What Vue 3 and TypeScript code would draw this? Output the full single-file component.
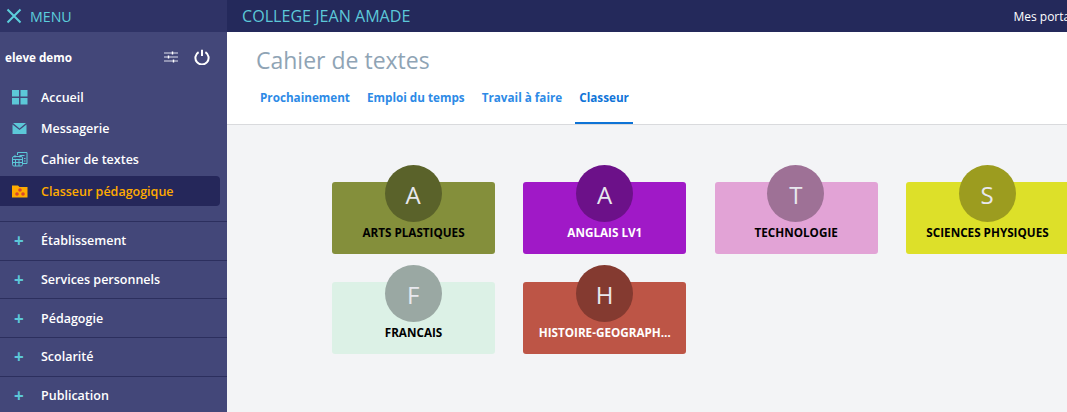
<script setup lang="ts">
interface Subject {
  letter: string
  label: string
  bg: string
  badge: string
  text: string
}

const subjects: Subject[] = [
  {letter: 'A', label: 'ARTS PLASTIQUES', bg: '#848f3b', badge: '#5a622a', text: '#000'},
  {letter: 'A', label: 'ANGLAIS LV1', bg: '#a019c7', badge: '#6c1189', text: '#fff'},
  {letter: 'T', label: 'TECHNOLOGIE', bg: '#e2a3d6', badge: '#9e7196', text: '#000'},
  {letter: 'S', label: 'SCIENCES PHYSIQUES', bg: '#dde029', badge: '#9c9c1f', text: '#000'},
  {letter: 'F', label: 'FRANCAIS', bg: '#dcf1e6', badge: '#9aa8a3', text: '#000'},
  {letter: 'H', label: 'HISTOIRE-GEOGRAPHIE', bg: '#bd5546', badge: '#843a30', text: '#fff'},
]

const sections = ['Établissement', 'Services personnels', 'Pédagogie', 'Scolarité', 'Publication']
const tabs = ['Prochainement', 'Emploi du temps', 'Travail à faire', 'Classeur']
</script>

<template>
  <div class="page">
    <aside class="sidebar">
      <div class="menu-head">
        <svg width="16" height="16" viewBox="0 0 16 16">
          <path d="M1.5 1.5L14.5 14.5M14.5 1.5L1.5 14.5" stroke="#5ccfdc" stroke-width="2" fill="none"/>
        </svg>
        <span>MENU</span>
      </div>
      <div class="user">
        <span class="user-name">eleve demo</span>
        <svg width="16" height="12" viewBox="0 0 16 12" class="user-settings">
          <path d="M1 2H15M1 6H15M1 10H15" stroke="#dfe1ee" stroke-width="1" fill="none"/>
          <path d="M9.5 .5V3.5M5.5 4.5V7.5M10.5 8.5V11.5" stroke="#fff" stroke-width="1.4" fill="none"/>
        </svg>
        <svg width="16" height="16" viewBox="0 0 16 16" class="user-power">
          <path d="M4.6 3.2A6.6 6.6 0 1 0 11.4 3.2M8 .8V7" stroke="#fff" stroke-width="2" fill="none"/>
        </svg>
      </div>
      <nav class="main-nav">
        <a class="nav-item">
          <svg width="16" height="15" viewBox="0 0 16 15"><path d="M0 0H7V6.5H0ZM8.5 0H15.5V6.5H8.5ZM0 8H7V14.5H0ZM8.5 8H15.5V14.5H8.5Z" fill="#5cc8d8"/></svg>
          Accueil
        </a>
        <a class="nav-item">
          <svg width="16" height="15" viewBox="0 0 16 15"><path d="M1 2H14L7.5 7.5ZM.5 3.5L7.5 9L14.5 3.5V13H.5Z" fill="#5cc8d8"/></svg>
          Messagerie
        </a>
        <a class="nav-item">
          <svg width="16" height="15" viewBox="0 0 16 15" fill="none" stroke="#5cc8d8" stroke-width="1"><path d="M5.5 3V.5H15V11.5H11"/><path d="M8 3.5H12.5M12 6.5H13.5M12 9H13.5"/><rect x=".5" y="4.5" width="10" height="9.5" rx="1.5"/><path d="M.5 7.5H10.5M3.5 7.5V14M7 7.5V14M.5 10.5H10.5M3 3V5.5M8 3V5.5"/></svg>
          Cahier de textes
        </a>
        <a class="nav-item active">
          <svg width="16" height="15" viewBox="0 0 16 15"><path d="M0 1.5H6L7.5 3H15.5V13.5H0Z" fill="#ffab00"/><circle cx="8" cy="6" r="1.8" fill="#d8472c"/><circle cx="5" cy="10" r="1.8" fill="#d8472c"/><circle cx="11" cy="10" r="1.8" fill="#d8472c"/></svg>
          Classeur pédagogique
        </a>
      </nav>
      <a v-for="s in sections" :key="s" class="section">
        <span class="plus">+</span>
        {{ s }}
      </a>
    </aside>
    <div class="content">
      <header class="topbar">
        <span class="college">COLLEGE JEAN AMADE</span>
        <span class="portals">Mes portails</span>
      </header>
      <div class="head">
        <h1>Cahier de textes</h1>
        <div class="tabs">
          <a v-for="t in tabs" :key="t" class="tab" :class="{selected: t === 'Classeur'}">{{ t }}</a>
        </div>
      </div>
      <main class="board">
        <div v-for="s in subjects" :key="s.label" class="card" :style="{background: s.bg, color: s.text}">
          <div class="badge" :style="{background: s.badge}">{{ s.letter }}</div>
          <div class="label">{{ s.label }}</div>
        </div>
      </main>
    </div>
  </div>
</template>

<style>
html, body {
  margin: 0;
  overflow: hidden;
}
</style>

<style scoped>
.page {
  display: flex;
  width: 1067px;
  height: 412px;
  overflow: hidden;
  font-family: "Open Sans", sans-serif;
}

.sidebar {
  flex: 0 0 227px;
  background: #434779;
  color: #fff;
}

.menu-head {
  display: flex;
  align-items: center;
  height: 32px;
  padding-left: 6px;
  gap: 8px;
  background: #2f3366;
  color: #5ccfdc;
  font-size: 14.2px;
}

.user {
  display: flex;
  align-items: center;
  height: 50px;
  padding-bottom: 1px;
  padding-left: 5px;
}

.user-name {
  flex: 1;
  font-size: 11.7px;
  font-weight: 700;
}

.user-settings {
  margin-right: 15px;
}

.user-power {
  margin-right: 17px;
}

.main-nav {
  width: 220px;
  margin-bottom: 15px;
}

.nav-item {
  display: flex;
  align-items: center;
  gap: 13px;
  height: 31px;
  padding-left: 12px;
  font-size: 12.5px;
  font-weight: 600;
}

.nav-item:not(.active) {
  padding-bottom: 2px;
  height: 29px;
}

.nav-item.active {
  height: 30px;
  background: #25275a;
  color: #ffab00;
  border-radius: 0 4px 4px 0;
}

.section {
  display: flex;
  align-items: center;
  height: 37.7px;
  border-top: 1px solid #2c2f5e;
  font-size: 12.5px;
  font-weight: 600;
}

.plus {
  width: 41px;
  padding-left: 14px;
  box-sizing: border-box;
  color: #5cc8d8;
  font-size: 17px;
  font-weight: 700;
}

.content {
  flex: 1;
  min-width: 0;
  background: #f3f4f6;
}

.topbar {
  display: flex;
  align-items: center;
  justify-content: space-between;
  height: 32px;
  padding-left: 15px;
  background: #24295b;
}

.college {
  color: #5cc8d8;
  font-size: 16.1px;
}

.portals {
  flex: none;
  margin-right: -15px;
  color: #fff;
  font-size: 12px;
}

.head {
  height: 92px;
  background: #fff;
  border-bottom: 1px solid #d9dadd;
  padding-left: 29px;
}

h1 {
  margin: 0;
  padding-top: 12px;
  color: #8fa4b5;
  font-size: 23px;
  font-weight: 400;
  line-height: 33px;
}

.tabs {
  display: flex;
  margin: 6px 0 0 0;
}

.tab {
  height: 39px;
  padding: 0 4px;
  margin-right: 9.1px;
  color: #2d8ae6;
  font-size: 11.7px;
  font-weight: 700;
  line-height: 29px;
}

.tab.selected {
  border-bottom: 2px solid #0e73d6;
  color: #1074d8;
}

.board {
  display: grid;
  grid-template-columns: repeat(4, 163px);
  grid-auto-rows: 72px;
  gap: 28px 28.33px;
  padding: 57px 0 0 105px;
}

.card {
  position: relative;
  border-radius: 3px;
  min-width: 0;
}

.badge {
  position: absolute;
  top: -17px;
  left: 52.7px;
  width: 57px;
  height: 57px;
  border-radius: 50%;
  color: #e8e8ee;
  font-size: 24px;
  line-height: 60px;
  text-align: center;
}

.label {
  padding: 41px 15.4px 0;
  overflow: hidden;
  font-size: 11.7px;
  font-weight: 700;
  line-height: 18px;
  text-align: center;
  text-overflow: ellipsis;
  white-space: nowrap;
}
</style>
